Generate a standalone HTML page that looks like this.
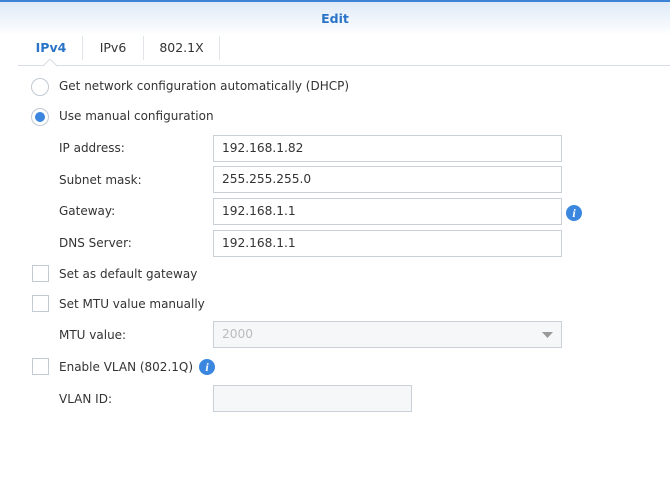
<!DOCTYPE html>
<html><head><style>
*{box-sizing:border-box;margin:0;padding:0}
body{width:670px;height:500px;background:#fff;font-family:"DejaVu Sans","Liberation Sans",sans-serif;font-size:12px;color:#333;position:relative;overflow:hidden}
.top{position:absolute;left:0;top:0;width:670px;height:36px;background:linear-gradient(#dfeaf7,#fff);border-top:2px solid #3d83d5}
.title{position:absolute;top:9px;width:100%;text-align:center;color:#2a74c8;font-weight:bold;font-size:12.5px}
.tab{position:absolute;top:38px;height:27px;line-height:20px;font-size:12.5px;text-align:center}
.sep{position:absolute;top:36px;width:1px;height:24px;background:#e1e5ea}
.line{position:absolute;left:18px;top:65px;width:652px;height:1px;background:#d8dde3}
.t{position:absolute;white-space:nowrap;line-height:14px}
.radio{position:absolute;width:18px;height:18px;border:1px solid #c3cad3;border-radius:50%;background:#fff}
.radio.on::after{content:"";position:absolute;left:3px;top:3px;width:10px;height:10px;border-radius:50%;background:#3b86e0}
.cb{position:absolute;left:32px;width:17px;height:17px;border:1px solid #c3cad3;background:#fff}
.in{position:absolute;left:213px;width:349px;height:27px;border:1px solid #c9d0d8;padding-left:8px;line-height:25px;font-size:12.2px}
.info{position:absolute;width:16px;height:16px;border-radius:50%;background:#3b87e0;color:#fff;font:italic bold 12px "Liberation Serif",serif;text-align:center;line-height:16px}
</style></head><body>
<div class="top"><div class="title">Edit</div></div>
<div class="tab" style="left:20px;width:62px;color:#2a74c8;font-weight:bold">IPv4</div>
<div class="tab" style="left:83px;width:60px">IPv6</div>
<div class="tab" style="left:144px;width:75px">802.1X</div>
<div class="sep" style="left:82px"></div><div class="sep" style="left:143px"></div><div class="sep" style="left:219px"></div>
<div class="line"></div>
<svg style="position:absolute;left:43px;top:59px" width="14" height="8"><path d="M0 7 L7 0 L14 7" fill="#fff" stroke="#d8dde3"/></svg>
<div class="radio" style="left:31px;top:78px"></div><div class="t" style="left:59px;top:79px">Get network configuration automatically (DHCP)</div>
<div class="radio on" style="left:31px;top:108px"></div><div class="t" style="left:59px;top:109px">Use manual configuration</div>
<div class="t" style="left:59px;top:141px">IP address:</div><div class="in" style="top:135px">192.168.1.82</div>
<div class="t" style="left:59px;top:173px">Subnet mask:</div><div class="in" style="top:166px">255.255.255.0</div>
<div class="t" style="left:59px;top:204px">Gateway:</div><div class="in" style="top:198px">192.168.1.1</div>
<div class="info" style="left:566px;top:205px">i</div>
<div class="t" style="left:59px;top:236px">DNS Server:</div><div class="in" style="top:230px">192.168.1.1</div>
<div class="cb" style="top:265px"></div><div class="t" style="left:59px;top:267px">Set as default gateway</div>
<div class="cb" style="top:295px"></div><div class="t" style="left:59px;top:297px">Set MTU value manually</div>
<div class="t" style="left:59px;top:328px">MTU value:</div><div class="in" style="top:321px;background:#f5f7f9;color:#bbb">2000</div>
<svg style="position:absolute;left:542px;top:332px" width="12" height="7"><path d="M0 0H11L5.5 6Z" fill="#999"/></svg>
<div class="cb" style="top:358px"></div><div class="t" style="left:59px;top:360px">Enable VLAN (802.1Q)</div>
<div class="info" style="left:199px;top:359px">i</div>
<div class="t" style="left:59px;top:392px">VLAN ID:</div><div class="in" style="top:385px;width:199px;background:#f5f7f9"></div>
</body></html>
